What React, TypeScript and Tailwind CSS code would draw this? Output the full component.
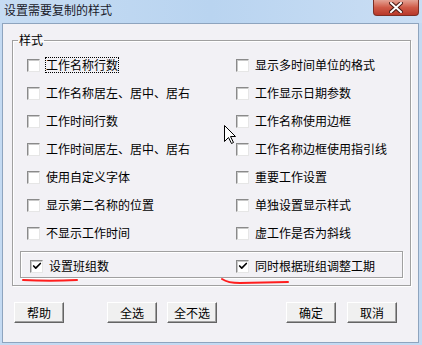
import { Check } from 'lucide-react';

const leftItems = [
  '工作名称行数',
  '工作名称居左、居中、居右',
  '工作时间行数',
  '工作时间居左、居中、居右',
  '使用自定义字体',
  '显示第二名称的位置',
  '不显示工作时间',
];

const rightItems = [
  '显示多时间单位的格式',
  '工作显示日期参数',
  '工作名称使用边框',
  '工作名称边框使用指引线',
  '重要工作设置',
  '单独设置显示样式',
  '虚工作是否为斜线',
];

const font = "font-['SimSun','Noto_Sans_CJK_SC',sans-serif]";

function CheckBox({ checked, label, focused }: { checked?: boolean; label: string; focused?: boolean }) {
  return (
    <div className="flex h-[28px] items-center gap-[5px]">
      <div className="flex h-[13px] w-[13px] shrink-0 items-center justify-center border border-t-[#8a8a8a] border-l-[#8a8a8a] border-b-[#e6e6e6] border-r-[#e6e6e6] bg-white shadow-[inset_1px_1px_0_#c8c8c8]">
        {checked && <Check className="h-[10px] w-[10px] text-black" strokeWidth={4} />}
      </div>
      <span
        className={
          focused
            ? 'border border-dotted border-black text-[12px] leading-[14px] text-black'
            : 'border border-transparent text-[12px] leading-[14px] text-black'
        }
      >
        {label}
      </span>
    </div>
  );
}

function Button({ label, className }: { label: string; className?: string }) {
  return (
    <button
      className={`flex h-[21px] w-[50px] items-center justify-center border border-t-white border-l-white border-b-[#646464] border-r-[#646464] bg-[#f0f0f0] text-[12px] leading-[14px] text-black shadow-[inset_-1px_-1px_0_#a0a0a0] ${className ?? ''}`}
    >
      {label}
    </button>
  );
}

export default function App() {
  return (
    <div className={`relative flex h-[345px] w-[422px] flex-col bg-[#c4daf2] ${font}`}>
      {/* Title bar */}
      <div className="flex h-[23px] items-start justify-between bg-gradient-to-r from-[#c6dcf3] via-[#b9d4f0] to-[#cadef4]">
        <span className="ml-[4px] mt-[3px] text-[12px] leading-[14px] text-[#1a1a2a]">设置需要复制的样式</span>
        <div className="mr-[3px] flex h-[16px] w-[46px] items-center justify-center rounded-b-[4px] border border-t-0 border-[#7d2f25] bg-gradient-to-b from-[#e3a294] via-[#cf5a47] to-[#b8382a]">
          <svg width="14" height="11" viewBox="0 0 14 11">
            <path d="M2 1 L12 10 M12 1 L2 10" stroke="#4a1a14" strokeWidth="4" strokeLinecap="square" />
            <path d="M2 1 L12 10 M12 1 L2 10" stroke="#ffffff" strokeWidth="2" strokeLinecap="square" />
          </svg>
        </div>
      </div>

      {/* Client area */}
      <div className="mb-[2px] ml-[2px] mr-[3px] flex flex-1 flex-col border border-[#8ea4be] bg-[#f2f1f5]">
        <fieldset className="ml-[9px] mr-[7px] mt-[9px] border border-[#a0a0a0] pb-[7px] shadow-[inset_1px_1px_0_#fff,1px_1px_0_#fff]">
          <legend className="ml-[5px] px-[1px] text-[12px] leading-[14px] text-black">样式</legend>
          <div className="mt-[4px] grid grid-cols-[209px_1fr] pl-[14px]">
            {leftItems.map((item, i) => (
              <div key={item} className="contents">
                <CheckBox label={item} focused={i === 0} />
                <CheckBox label={rightItems[i]} />
              </div>
            ))}
          </div>
          <div className="mx-[7px] mt-[4px] grid h-[27px] grid-cols-[206px_1fr] items-center border border-[#a0a0a0] pl-[9px] shadow-[inset_1px_1px_0_#fff,1px_1px_0_#fff]">
            <CheckBox checked label="设置班组数" />
            <CheckBox checked label="同时根据班组调整工期" />
          </div>
        </fieldset>

        <div className="mt-[16px] flex">
          <Button label="帮助" className="ml-[11px]" />
          <Button label="全选" className="ml-[43px]" />
          <Button label="全不选" className="ml-[10px]" />
          <Button label="确定" className="ml-[69px]" />
          <Button label="取消" className="ml-[11px]" />
        </div>
      </div>

      {/* red annotation strokes */}
      <svg className="pointer-events-none absolute left-0 top-0" width="422" height="345">
        <path d="M23 280 Q50 281.5 77 280" stroke="#ff1e1e" strokeWidth="2" fill="none" strokeLinecap="round" />
        <path d="M222 279 Q228 283 240 283 L288 282" stroke="#ff1e1e" strokeWidth="2" fill="none" strokeLinecap="round" />
      </svg>

      {/* mouse cursor */}
      <svg className="pointer-events-none absolute left-[224px] top-[125px]" width="13" height="20" viewBox="0 0 13 20">
        <path d="M0.5 0.5 L0.5 16.5 L4.5 12.5 L7.5 18.5 L9.5 17.5 L6.5 11.5 L11.5 11.5 Z" fill="#fff" stroke="#000" strokeWidth="1" />
      </svg>
    </div>
  );
}
